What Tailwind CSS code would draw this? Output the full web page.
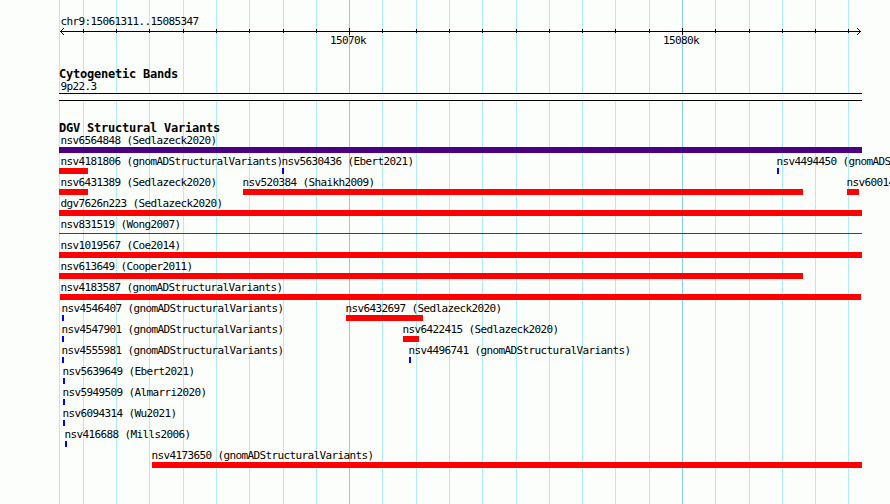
<!DOCTYPE html>
<html lang="en">

<head>
  <meta charset="UTF-8">
  <meta name="viewport" content="width=device-width, initial-scale=1.0">
  <title>chr9:15061311..15085347</title>
  <script src="https://cdn.jsdelivr.net/npm/@tailwindcss/browser@4"></script>
</head>

<body class="bg-[#fcfefc] overflow-hidden">
  <main
    class="relative w-[890px] h-[504px] overflow-hidden font-['DejaVu_Sans_Mono',monospace] text-[11px] leading-[13px] tracking-[-0.623px] text-black whitespace-nowrap">
    <!-- vertical grid, one line per kb -->
    <div id="grid" class="absolute inset-0"></div>

    <div class="relative flex flex-col pt-[15px]">
      <header class="h-[53px]">
        <p class="pl-[60.5px]">chr9:15061311..15085347</p>
        <div id="axis" class="relative h-[7px]">
          <svg class="absolute left-[59px] top-0" width="803" height="7" fill="none" stroke="#000"
            shape-rendering="crispEdges">
            <path d="M1 3.5H802" />
            <path fill="#000" stroke="none"
              d="M2 2h1v1h-1zM3 1h1v1h-1zM4 0h1v1h-1zM2 4h1v1h-1zM3 5h1v1h-1zM4 6h1v1h-1zM800 2h1v1h-1zM799 1h1v1h-1zM798 0h1v1h-1zM800 4h1v1h-1zM799 5h1v1h-1zM798 6h1v1h-1z" />
          </svg>
        </div>
        <div class="flex pl-[330px] -mt-px">
          <span class="w-[333px]">15070k</span>
          <span>15080k</span>
        </div>
      </header>

      <section class="h-[54px]">
        <h2 class="pl-[59px] h-3 text-xs leading-[13px] font-bold tracking-[-0.225px]">Cytogenetic Bands</h2>
        <p class="pl-[60.5px]">9p22.3</p>
        <div class="ml-[59px] w-[803px] h-2 border-y border-black bg-[#fcfefc]"></div>
      </section>

      <section>
        <h2 class="pl-[59px] h-3 text-xs leading-[13px] font-bold tracking-[-0.225px]">DGV Structural Variants</h2>
        <div id="variants"></div>
      </section>
    </div>
  </main>
</body>
<script>
  const grid = document.querySelector('#grid');
  const axis = document.querySelector('#axis');
  const variants = document.querySelector('#variants');

  const major = [349, 682];
  const lines = [59, 83, 116, 149, 183, 216, 249, 283, 316, 349, 382, 416, 449, 482, 516, 549, 582, 615, 649, 682, 715, 749, 782, 815, 848];

  for (const x of lines) {
    const big = major.includes(x);
    grid.insertAdjacentHTML('beforeend',
      `<div class="absolute inset-y-0 w-px ${big ? 'bg-[#87ceeb]' : 'bg-[#afeeee]'}" style="left: ${x}px"></div>`);
    if (x > 59) {
      axis.insertAdjacentHTML('beforeend',
        `<div class="absolute w-px bg-black ${big ? 'top-0 h-[7px]' : 'top-px h-1'}" style="left: ${x}px"></div>`);
    }
  }

  const gain = 'h-1.5 bg-[#0000ff]';
  const loss = 'h-1.5 bg-[#ff0000]';
  const complex = 'h-1.5 bg-[#4b0082]';
  const thin = 'mt-0.5 h-px bg-[#dc0014]';

  // [name, start, end, style, label start]
  const rows = [
    [['nsv6564848 (Sedlazeck2020)', 59, 862, complex, 60.5]],
    [['nsv4181806 (gnomADStructuralVariants)', 59, 88, loss, 60.5], ['nsv5630436 (Ebert2021)', 282, 284, gain, 281.5], ['nsv4494450 (gnomADStructuralVariants)', 777, 779, gain, 776.5]],
    [['nsv6431389 (Sedlazeck2020)', 59, 88, loss, 60.5], ['nsv520384 (Shaikh2009)', 243, 803, loss, 242.5], ['nsv60014', 847, 859, loss, 846.5]],
    [['dgv7626n223 (Sedlazeck2020)', 59, 862, loss, 60.5]],
    [['nsv831519 (Wong2007)', 59, 862, thin, 60.5]],
    [['nsv1019567 (Coe2014)', 59, 862, loss, 60.5]],
    [['nsv613649 (Cooper2011)', 59, 803, loss, 60.5]],
    [['nsv4183587 (gnomADStructuralVariants)', 60, 861, loss, 60.5]],
    [['nsv4546407 (gnomADStructuralVariants)', 62, 64, gain, 61.5], ['nsv6432697 (Sedlazeck2020)', 346, 423, loss, 345.5]],
    [['nsv4547901 (gnomADStructuralVariants)', 62, 64, gain, 61.5], ['nsv6422415 (Sedlazeck2020)', 403, 419, loss, 402.5]],
    [['nsv4555981 (gnomADStructuralVariants)', 62, 64, gain, 61.5], ['nsv4496741 (gnomADStructuralVariants)', 409, 411, gain, 408.5]],
    [['nsv5639649 (Ebert2021)', 63, 65, gain, 62.5]],
    [['nsv5949509 (Almarri2020)', 63, 65, gain, 62.5]],
    [['nsv6094314 (Wu2021)', 63, 65, gain, 62.5]],
    [['nsv416688 (Mills2006)', 65, 67, gain, 64.5]],
    [['nsv4173650 (gnomADStructuralVariants)', 152, 862, loss, 151.5]],
  ];

  const templateVariant = ([name, start, end, style, label]) => {
    return `<span class="absolute top-0" style="left: ${label}px">${name}</span>
      <div class="absolute top-[13px] ${style}" style="left: ${start}px; width: ${end - start}px"></div>`;
  }

  for (const row of rows) {
    variants.insertAdjacentHTML('beforeend', `<div class="relative h-[21px]">${row.map(templateVariant).join('')}</div>`);
  }
</script>

</html>
